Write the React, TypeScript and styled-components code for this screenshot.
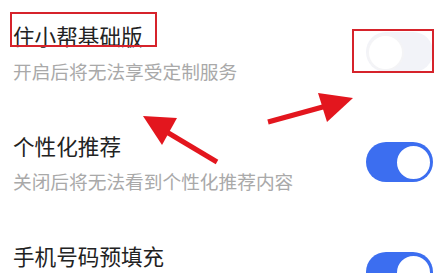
import React from 'react'
import styled, { createGlobalStyle } from 'styled-components'

const GlobalStyle = createGlobalStyle`
  html, body {
    margin: 0;
    padding: 0;
    background: #ffffff;
  }
  body {
    font-family: 'Noto Sans CJK SC', 'Noto Sans', sans-serif;
  }
`

type Setting = { title: string; desc?: string; on: boolean; marked: boolean }

const settings: Setting[] = [
  { title: '住小帮基础版', desc: '开启后将无法享受定制服务', on: false, marked: true },
  { title: '个性化推荐', desc: '关闭后将无法看到个性化推荐内容', on: true, marked: false },
  { title: '手机号码预填充', on: true, marked: false },
]

const App = () => {
  return (
    <Page>
      <GlobalStyle />
      {settings.map((s) => (
        <Row key={s.title}>
          <TextCol>
            <Title>
              <Label $marked={s.marked}>{s.title}</Label>
            </Title>
            {s.desc && <Desc>{s.desc}</Desc>}
          </TextCol>
          <SwitchWrap $marked={s.marked}>
            <Switch $on={s.on}>
              <Knob $on={s.on} />
            </Switch>
          </SwitchWrap>
        </Row>
      ))}

      <Arrows viewBox="0 0 446 273" width="446" height="273">
        <line x1="268" y1="122" x2="330" y2="105" stroke="#e3161e" strokeWidth="5" />
        <polygon points="318,93 353,98 327,122" fill="#e3161e" />
        <line x1="217" y1="162" x2="160" y2="128" stroke="#e3161e" strokeWidth="5" />
        <polygon points="143,116 177,118 162,145" fill="#e3161e" />
      </Arrows>
    </Page>
  )
}

const Page = styled.div`
  position: relative;
  width: 446px;
  height: 273px;
  overflow: hidden;
  padding: 0 13px;
  box-sizing: border-box;
`
const Row = styled.div`
  display: flex;
  align-items: flex-start;
  justify-content: space-between;
  height: 110px;
  padding-top: 21px;
  box-sizing: border-box;
`
const TextCol = styled.div`
  display: flex;
  flex-direction: column;
  gap: 7px;
`
const Title = styled.div`
  font-size: 21.6px;
  line-height: 30px;
  color: #222222;
`
const Label = styled.span<{ $marked: boolean }>`
  position: relative;
  &::after {
    content: '';
    display: ${(p) => (p.$marked ? 'block' : 'none')};
    position: absolute;
    inset: -8px -14px 4px -3px;
    border: 2px solid #d6232b;
  }
`
const Desc = styled.div`
  font-size: 18.7px;
  line-height: 26px;
  color: #a9a9a9;
  white-space: nowrap;
`
const SwitchWrap = styled.div<{ $marked: boolean }>`
  position: relative;
  display: flex;
  margin-top: 11px;
  &::after {
    content: '';
    display: ${(p) => (p.$marked ? 'block' : 'none')};
    position: absolute;
    inset: -3px -1px -1px -14px;
    border: 2px solid #d6232b;
  }
`
const Switch = styled.div<{ $on: boolean }>`
  width: 67px;
  height: 40px;
  border-radius: 20px;
  background: ${(p) => (p.$on ? '#3c6ef0' : '#f2f3f8')};
  display: flex;
  align-items: center;
  justify-content: ${(p) => (p.$on ? 'flex-end' : 'flex-start')};
  padding: 0 1px;
  box-sizing: border-box;
`
const Knob = styled.div<{ $on: boolean }>`
  width: 37px;
  height: 37px;
  border-radius: 50%;
  background: #ffffff;
  box-sizing: border-box;
  border: 2px solid ${(p) => (p.$on ? '#3c6ef0' : '#f4f4f6')};
`
const Arrows = styled.svg`
  position: absolute;
  left: 0;
  top: 0;
  pointer-events: none;
`

export default App
